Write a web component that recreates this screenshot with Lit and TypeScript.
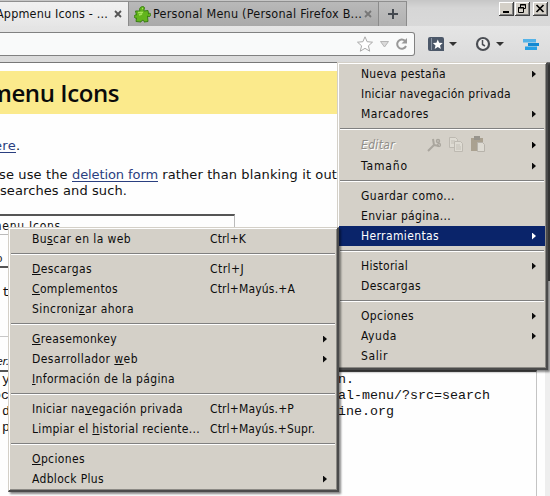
import { LitElement, html, css, svg, nothing } from "lit";
import { customElement, property } from "lit/decorators.js";
import { classMap } from "lit/directives/class-map.js";

/** One line of text set to a given width; "&" marks the access key. */
@customElement("fit-text")
class FitText extends LitElement {
  @property() text = "";
  @property({ type: Number }) w = 0;
  static styles = css`
    :host { display: inline-block; white-space: pre; }
    u { text-underline-offset: 1px; text-decoration-thickness: 1px; }
  `;
  async firstUpdated() {
    await document.fonts.ready;
    const span = this.renderRoot.querySelector("span")!;
    const n = this.text.replace("&", "").length;
    const natural = span.getBoundingClientRect().width;
    span.style.letterSpacing = `${(this.w - natural) / n}px`;
  }
  render() {
    const i = this.text.indexOf("&");
    const t = this.text;
    return i < 0
      ? html`<span>${t}</span>`
      : html`<span>${t.slice(0, i)}<u>${t[i + 1]}</u>${t.slice(i + 2)}</span>`;
  }
}

type Item = { t: string; w: number; k?: string; kw?: number; sub?: boolean; on?: boolean; edit?: boolean } | null;

const mainMenu: Item[] = [
  { t: "Nueva pestaña", w: 85, sub: true },
  { t: "Iniciar navegación privada", w: 150 },
  { t: "Marcadores", w: 68, sub: true },
  null,
  { t: "Editar", w: 34, sub: true, edit: true },
  { t: "Tamaño", w: 47, sub: true },
  null,
  { t: "Guardar como...", w: 94 },
  { t: "Enviar página...", w: 90 },
  { t: "Herramientas", w: 78, sub: true, on: true },
  null,
  { t: "Historial", w: 47, sub: true },
  { t: "Descargas", w: 60 },
  null,
  { t: "Opciones", w: 53, sub: true },
  { t: "Ayuda", w: 36, sub: true },
  { t: "Salir", w: 27 },
];

const toolsMenu: Item[] = [
  { t: "Bu&scar en la web", w: 99, k: "Ctrl+K", kw: 36 },
  null,
  { t: "&Descargas", w: 60, k: "Ctrl+J", kw: 34 },
  { t: "&Complementos", w: 86, k: "Ctrl+Mayús.+A", kw: 85 },
  { t: "Sincroni&zar ahora", w: 102 },
  null,
  { t: "&Greasemonkey", w: 85, sub: true },
  { t: "Desarrollador &web", w: 106, sub: true },
  { t: "&Información de la página", w: 143 },
  null,
  { t: "Iniciar na&vegación privada", w: 151, k: "Ctrl+Mayús.+P", kw: 84 },
  { t: "Limpiar el &historial reciente...", w: 168, k: "Ctrl+Mayús.+Supr.", kw: 105 },
  null,
  { t: "&Opciones", w: 53 },
  { t: "Adblock Plus", w: 72, sub: true },
];

const editIcons = html`<svg class="edit-icons" width="60" height="18" viewBox="0 0 60 18">
  <g fill="none" stroke="#aaa69e" stroke-width="2"><path d="M2 15 8 9M8 9 7 3M8 9l5 1" /><circle cx="12" cy="5" r="1.500" stroke-width="1.500"/><circle cx="13" cy="9" r="1.500" stroke-width="1.300"/></g>
  <g fill="#dedbd3" stroke="#bdb9b1"><path d="M23.500 1.500h6l2 2v8h-8z"/><path d="M28.500 5.500h6l2 2v8h-8z"/></g>
  <path d="M25 5h4M25 7h3M30 9h4M30 11h5M30 13h5" stroke="#c3bfb6"/>
  <path d="M45 2h12v13H45z" fill="#aaa190"/><path d="M48 0h6v4h-6z" fill="#98958e"/><path d="M51.500 6.500h5l2 2v7h-7z" fill="#dedbd3" stroke="#b7b3ab"/>
</svg>`;

@customElement("popup-menu")
class PopupMenu extends LitElement {
  @property({ attribute: false }) items: Item[] = [];
  static styles = css`
    :host {
      display: block; box-sizing: border-box; background: #d4d0c8; color: #0c0c0c;
      font: 12px/20px "DejaVu Sans Condensed", "DejaVu Sans", sans-serif; font-stretch: condensed;
      border: 1px solid #d4d0c8; border-right: 2px solid #4b4b4b; border-bottom: 2px solid #4b4b4b;
      box-shadow: inset 1px 1px #fff, inset -1px -1px #8c8a85, 2px 2px 2px #0007;
      padding: 1px;
    }
    svg { display: block; flex: none; }
    .row { height: 20px; display: flex; align-items: center; padding-left: 22px; }
    .row.edit { height: 22px; font-style: italic; color: #8f8d88; text-shadow: 1px 1px #fff; }
    .row.on { background: #0a246a; color: #fff; }
    .label { flex: none; }
    .keyed .label { width: 178px; }
    .edit .label { width: 65px; }
    .arrow { flex: none; margin-left: auto; margin-right: 9px; width: 4px; height: 7px; background: currentColor; clip-path: polygon(0 0, 100% 50%, 0 100%); }
    .edit .arrow { background: #000; }
    .sep { height: 2px; margin: 4px 1px; box-sizing: border-box; border-top: 1px solid #808080; border-bottom: 1px solid #fff; }
  `;
  render() {
    return this.items.map((i) =>
      i === null
        ? html`<div class="sep"></div>`
        : html`<div class=${classMap({ row: true, on: !!i.on, edit: !!i.edit, keyed: !!i.k })}>
            <span class="label"><fit-text .text=${i.t} .w=${i.w}></fit-text></span>
            ${i.edit ? editIcons : nothing}
            ${i.k ? html`<fit-text .text=${i.k} .w=${i.kw ?? 0}></fit-text>` : nothing}
            ${i.sub ? html`<i class="arrow"></i>` : nothing}
          </div>`
    );
  }
}

const star = "M8 .8 10.100 5.700 15.500 6.200 11.400 9.800 12.700 15.200 8 12.300 3.300 15.200 4.600 9.800 .5 6.200 5.900 5.700z";

@customElement("app-root")
class AppRoot extends LitElement {
  static styles = css`
    :host { display: block; position: relative; width: 550px; height: 496px; overflow: hidden; background: #fefefe; color: #111; }
    svg { display: block; flex: none; }
    .tabs { height: 26px; display: flex; align-items: flex-start; background: linear-gradient(#c6c6c6, #d6d6d6 8px, #d9d9d9); font: 12.5px/24px "DejaVu Sans Condensed", "DejaVu Sans", sans-serif; font-stretch: condensed; }
    .tab { box-sizing: border-box; height: 25px; margin-top: 1px; display: flex; align-items: center; border-top: 1px solid #8f8f8f; border-right: 1px solid #8b8b8b; }
    .first { width: 129px; height: 25px; background: linear-gradient(#f1f1f1, #e6e6e6); }
    .first fit-text { margin-left: -4px; width: 118px; }
    .second { width: 250px; background: linear-gradient(#b9b9b9, #a9a9a9); padding-left: 5px; }
    .second fit-text { margin-left: 2px; width: 211px; }
    .plus { width: 28px; background: linear-gradient(#bfbfbf, #b1b1b1); justify-content: center; }
    .win { margin-left: auto; display: flex; padding: 2px 2px 0 0; }
    .win svg { margin-left: 1px; }
    .win svg:last-child { margin-left: 3px; }
    .bar { box-sizing: border-box; height: 37px; border-bottom: 1px solid #777; background: linear-gradient(#e5e5e5, #dadada); padding-top: 6px; display: flex; }
    .url { box-sizing: border-box; width: 415px; height: 24px; border: 1px solid #818181; border-left: 0; border-radius: 0 3px 3px 0; background: #f9fafa; display: flex; justify-content: flex-end; align-items: center; padding-right: 4px; }
    .page { height: 433px; padding-top: 8px; box-sizing: border-box; overflow: hidden; font: 13px/16px "DejaVu Sans", sans-serif; }
    .title { height: 43px; line-height: 43px; background: #fbea8c; font-family: "Open Sans", sans-serif; font-size: 24px; font-weight: 600; overflow: hidden; color: #0a0a0a; }
    .title fit-text { margin-left: -11px; }
    .p1 { margin-top: 24px; height: 16px; }
    .p1 .a { margin-left: -6px; }
    .p2 { margin-top: 13px; height: 32px; }
    .p2 .line:first-child { margin-left: -1px; }
    .a { color: #2a3f80; text-decoration: underline; text-underline-offset: 2px; }
    .p1, .line { display: flex; }
    .field { box-sizing: border-box; width: 235px; height: 21px; margin-top: 15px; border-top: 2px solid #555; border-right: 1px solid #bbb; border-bottom: 1px solid #bbb; font: 12px/20px "DejaVu Sans Condensed", sans-serif; font-stretch: condensed; overflow: hidden; }
    .field fit-text { margin-left: -9px; }
    .code { box-sizing: border-box; font: 13.330px/16px "Liberation Mono", monospace; overflow: hidden; width: 537px; border-right: 1px solid #c4c4c4; }
    .b0 { height: 31px; padding-top: 17px; font-size: 11px; border-right: 0; line-height: 14px; }
    .b0 span { margin-left: -4px; }
    .b1 { height: 71px; border-top: 2px solid #555; padding-top: 17px; border-bottom: 1px solid #c8c8c8; padding-left: 2px; }
    .b2 { height: 33px; padding-top: 19px; font: italic 11px/12px "DejaVu Sans", sans-serif; border-right: 0; }
    .b2 fit-text { margin-left: -4px; }
    .b3 { height: 127px; border-top: 2px solid #555; }
    .cols { display: grid; grid-template-columns: 338px 1fr; height: 16px; }
    .cols span { padding-left: 2px; }
    .cols .cut { padding-left: 0; margin-left: -7px; }
    .cols b { font-weight: 400; }
    .scroll { position: absolute; left: 545px; top: 63px; width: 5px; height: 433px; background: linear-gradient(90deg, #555, #666 3px, #444) 0 0 / 5px 218px no-repeat #eee; }
    .main { position: absolute; left: 337px; top: 62px; width: 211px; height: 308px; }
    .tools { position: absolute; left: 8px; top: 227px; width: 331px; height: 265px; }
  `;
  private close(color: string) {
    return html`<svg width="8" height="8" viewBox="0 0 8 8"><path d="M1 1l6 6M7 1 1 7" stroke=${color} stroke-width="1.800"/></svg>`;
  }
  private winButton(glyph: unknown) {
    return html`<svg width="15" height="14" viewBox="0 0 15 14"><path fill="#404040" d="M0 0h15v14H0z"/><path fill="#fff" d="M0 0h14v13H0z"/><path fill="#808080" d="M1 1h13v12H1z"/><path fill="#d4d0c8" d="M1 1h12v11H1z"/>${glyph}</svg>`;
  }
  render() {
    return html`
      <div class="tabs">
        <div class="tab first"><fit-text .text=${"Appmenu Icons - ..."} .w=${112}></fit-text>${this.close("#555")}</div>
        <div class="tab second">
          <svg width="17" height="17" viewBox="0 0 17 17"><path d="M6 5C4 1 10-1 10.500 2 10.700 3 9.500 4 10 5l4-.5.5 3.500c1-1.500 3-.5 2 1.500s-2 1-3 .5l.5 5.500-4 .5c1-2-3-2.500-3 0L2 15.500l.5-3.500c-3 1-3-4 0-3L1.500 5z" fill="#63b51c" stroke="#397d14"/><path d="M4 6.500h5M8 2.500l1 0M5 9l3-1" stroke="#a6e25a" stroke-width="1.500" fill="none"/></svg>
          <fit-text .text=${"Personal Menu (Personal Firefox B..."} .w=${209}></fit-text>${this.close("#777")}
        </div>
        <div class="tab plus"><svg width="10" height="10" viewBox="0 0 10 10"><path d="M5 0v10M0 5h10" stroke="#444950" stroke-width="2"/></svg></div>
        <div class="win">
          ${this.winButton(svg`<path d="M4 9h6v2H4z"/>`)}
          ${this.winButton(svg`<path d="M5.500 5V2.500h5v4H9M5 3h6M3.500 5.500h5v5h-5zM3 6h6" fill="none" stroke="#000"/>`)}
          ${this.winButton(svg`<path d="M3.500 3l7 7M10.500 3l-7 7" stroke="#000" stroke-width="1.700"/>`)}
        </div>
      </div>
      <div class="bar">
        <div class="url">
          <svg width="54" height="18" viewBox="0 0 54 18">
            <path d=${star} transform="translate(1 1)" fill="#fff" stroke="#aaa"/>
            <path d="M24.500 6.500h8l-4 5.500z" fill="#dadada" stroke="#b5b5b5"/>
            <path d="M49 5.800A4.600 4.600 0 1 0 50 11" fill="none" stroke="#999" stroke-width="2"/><path d="M51 3v5.500h-5.500z" fill="#999"/>
          </svg>
        </div>
        <svg width="134" height="24" viewBox="415 32 134 24">
          <path d="M430 37h12a2 2 0 0 1 2 2v12h-14a2 2 0 0 1-2-2V39a2 2 0 0 1 2-2z" fill="#4c5869"/><path d="M431.500 38v12" stroke="#8893a2"/>
          <path d=${star} transform="translate(432.500 39) scale(.66)" fill="#fff"/>
          <path d="M449 42h8l-4 4z" fill="#333"/>
          <circle cx="483" cy="44" r="6" fill="#eee" stroke="#4b4e54" stroke-width="2.200"/><path d="M482.500 40v4.500l2.500 1.500" fill="none" stroke="#4b4e54" stroke-width="1.500"/>
          <path d="M496 42h8l-4 4z" fill="#333"/>
          <path d="M523 39h13v3.500h-13z" fill="#55b3e8"/><path d="M528 43h11v3h-11z" fill="#1489d2"/><path d="M525 46.500h12V50h-12z" fill="#27a0e5"/>
        </svg>
      </div>
      <div class="page">
        <div class="title"><fit-text .text=${"menu Icons"} .w=${130}></fit-text></div>
        <div class="p1"><fit-text class="a" .text=${"ere"} .w=${22}></fit-text>.</div>
        <div class="p2">
          <div class="line"><fit-text .text=${"se use the "} .w=${73}></fit-text><fit-text class="a" .text=${"deletion form"} .w=${86}></fit-text><fit-text .text=${" rather than blanking it out"} .w=${179}></fit-text></div>
          <div class="line"><fit-text .text=${"searches and such."} .w=${127}></fit-text></div>
        </div>
        <div class="field"><fit-text .text=${"menu Icons"} .w=${70}></fit-text></div>
        <div class="code b0"><span>o</span></div>
        <div class="code b1">t</div>
        <div class="code b2"><fit-text .text=${"er."} .w=${13}></fit-text></div>
        <div class="code b3">
          <div class="cols"><span>y</span><b>n.</b></div>
          <div class="cols"><span class="cut">oc</span><b>al-menu/?src=search</b></div>
          <div class="cols"><span>d</span><b>ine.org</b></div>
          <div class="cols"><span>p</span></div>
        </div>
      </div>
      <div class="scroll"></div>
      <popup-menu class="main" .items=${mainMenu}></popup-menu>
      <popup-menu class="tools" .items=${toolsMenu}></popup-menu>
    `;
  }
}
